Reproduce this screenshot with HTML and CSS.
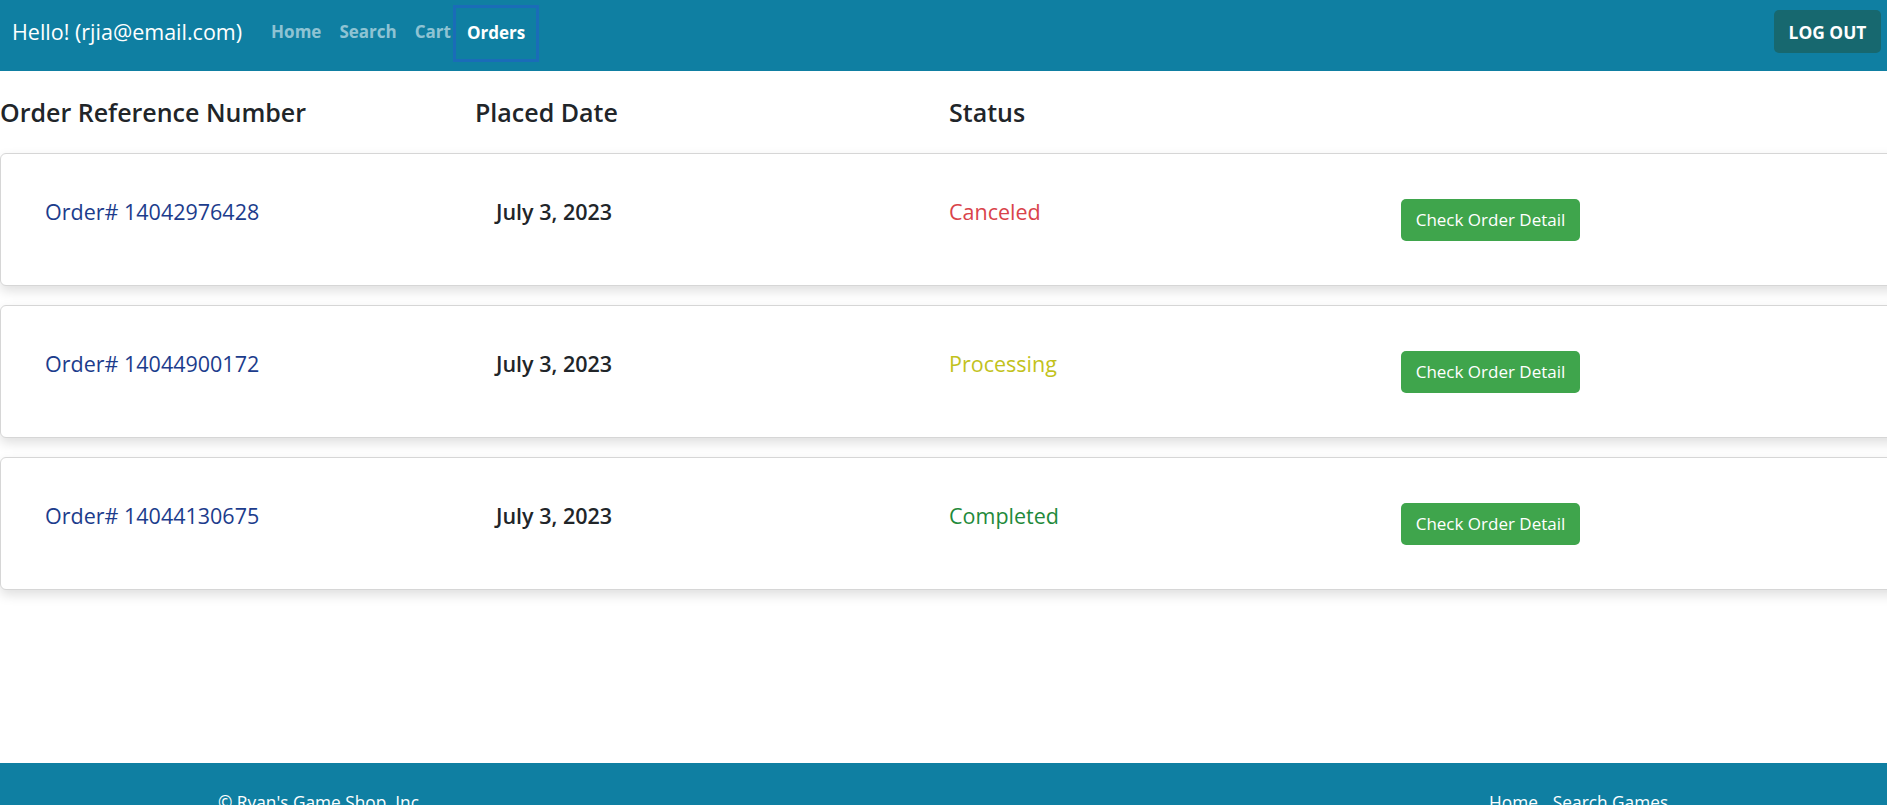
FILE: index.html
```html
<!DOCTYPE html>
<html lang="en">
<head>
<meta charset="utf-8">
<title>Orders</title>
<link rel="stylesheet" href="styles.css">
</head>
<body>
<nav class="navbar">
  <span class="brand">Hello! (rjia@email.com)</span>
  <ul class="nav-links">
    <li><a class="nav-link" href="#">Home</a></li>
    <li><a class="nav-link" href="#">Search</a></li>
    <li><a class="nav-link" href="#">Cart</a></li>
    <li><a class="nav-link active" href="#">Orders</a></li>
  </ul>
  <button class="logout">LOG OUT</button>
</nav>
<main class="orders">
  <div class="orders-head">
    <h4>Order Reference Number</h4>
    <h4>Placed Date</h4>
    <h4>Status</h4>
    <span></span>
  </div>
  <div class="order-card">
    <p class="order-ref">Order# 14042976428</p>
    <p class="order-date">July 3, 2023</p>
    <p class="order-status canceled">Canceled</p>
    <div><button class="detail-btn">Check Order Detail</button></div>
  </div>
  <div class="order-card">
    <p class="order-ref">Order# 14044900172</p>
    <p class="order-date">July 3, 2023</p>
    <p class="order-status processing">Processing</p>
    <div><button class="detail-btn">Check Order Detail</button></div>
  </div>
  <div class="order-card">
    <p class="order-ref">Order# 14044130675</p>
    <p class="order-date">July 3, 2023</p>
    <p class="order-status completed">Completed</p>
    <div><button class="detail-btn">Check Order Detail</button></div>
  </div>
</main>
<footer class="footer">
  <span class="copy">© Ryan's Game Shop, Inc.</span>
  <span class="footer-links"><a href="#">Home</a><a href="#">Search Games</a></span>
</footer>
</body>
</html>
```
FILE: styles.css
```css
* { box-sizing: border-box; }
html, body { margin: 0; padding: 0; }
body {
  font-family: "Open Sans", "Noto Sans", "Liberation Sans", sans-serif;
  color: #212529;
  background: #fff;
  overflow-x: hidden;
}
.navbar {
  height: 71px;
  background: #0f7fa2;
  display: flex;
  align-items: center;
  padding: 0 6px 8px 12px;
}
.brand {
  color: #fff;
  font-size: 21.5px;
  margin-right: 20px;
}
.nav-links {
  list-style: none;
  margin: 0;
  padding: 0;
  display: flex;
  align-items: center;
  flex: 1;
}
.nav-link {
  display: block;
  color: rgba(255,255,255,0.55);
  font-weight: 700;
  font-size: 17px;
  line-height: 24px;
  text-decoration: none;
  padding: 8px 9px;
}
.nav-link.active {
  color: #fff;
  border: 3px solid #1a6cb8;
  padding: 13px 11px 14px 11px;
  margin-left: -7px;
  position: relative;
  top: 2px;
}
.logout {
  background: #17686f;
  color: #fff;
  border: 0;
  border-radius: 5px;
  font: 700 17.4px "Open Sans", "Noto Sans", sans-serif;
  width: 107px;
  height: 43px;
  padding: 0;
}
.orders {
  min-height: 692px;
  overflow-x: clip;
  padding-top: 26px;
}
.orders-head {
  display: grid;
  grid-template-columns: 475px 474px 474px 1fr;
  margin-bottom: 26px;
}
.orders-head h4 {
  margin: 0;
  font-size: 25px;
  font-weight: 600;
  line-height: 30px;
  color: #212529;
}
.order-card {
  display: grid;
  grid-template-columns: 451px 453px 452px 1fr;
  align-items: center;
  width: calc(100% + 40px);
  height: 133px;
  margin-bottom: 19px;
  padding-left: 44px;
  border: 1px solid #d6d6d6;
  border-radius: 6px;
  background: #fff;
  box-shadow: 0 5px 12px rgba(0,0,0,0.13);
}
.order-card p {
  margin: 0 0 15px;
  font-size: 21.5px;
  line-height: 24px;
}
.order-ref { color: #1c3c8c; font-weight: 500; }
.order-date { color: #212529; font-weight: 600; font-size: 21px; }
.order-status { font-weight: 500; }
.canceled { color: #d9434a; }
.processing { color: #c2c21c; }
.completed { color: #1f8a3b; }
.detail-btn {
  background: #3fa54c;
  color: #fff;
  border: 0;
  border-radius: 5px;
  width: 179px;
  height: 42px;
  padding: 0;
  font: 400 17px "Open Sans", "Noto Sans", sans-serif;
}
.footer {
  background: #0f7fa2;
  color: #fff;
  height: 120px;
  display: grid;
  grid-template-columns: 1271px 1fr;
  align-items: start;
  padding: 28px 0 0 218px;
  font-size: 17.3px;
  line-height: 24px;
}
.footer-links a {
  color: #fff;
  text-decoration: none;
  margin-right: 15px;
}
```
